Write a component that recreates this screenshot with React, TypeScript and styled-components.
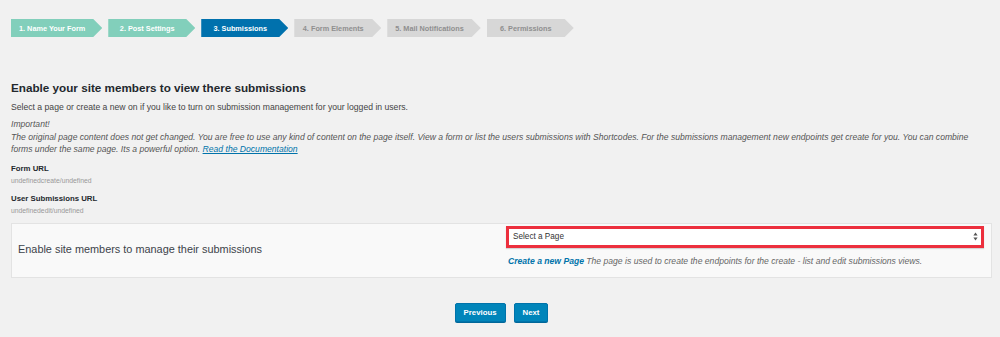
import React from "react";
import styled, { createGlobalStyle } from "styled-components";

const Global = createGlobalStyle`
  html, body { margin: 0; padding: 0; background: #f1f1f1; }
  body { font-family: "Liberation Sans", Arial, sans-serif; color: #444; }
  * { box-sizing: border-box; }
`;

const Page = styled.div`
  width: 1000px;
  height: 337px;
  padding: 19px 8px 0 11px;
  overflow: hidden;
`;

const StepBar = styled.div`
  display: flex;
  gap: 6px;
  height: 18px;
`;

type Tone = "done" | "active" | "todo";

const Step = styled.div<{ $tone: Tone }>`
  height: 18px;
  min-width: 87px;
  padding: 0 17px 0 8px;
  display: flex;
  align-items: center;
  justify-content: center;
  font-size: 7.3px;
  font-weight: 700;
  white-space: nowrap;
  clip-path: polygon(0 0, calc(100% - 9px) 0, 100% 50%, calc(100% - 9px) 100%, 0 100%);
  background: ${(p) =>
    p.$tone === "done" ? "#82cfbb" : p.$tone === "active" ? "#0071ad" : "#d7d7d7"};
  color: ${(p) => (p.$tone === "todo" ? "#8f8f8f" : "#ffffff")};
`;

const Heading = styled.h2`
  margin: 43px 0 0;
  font-size: 11.7px;
  line-height: 16px;
  font-weight: 700;
  color: #23282d;
`;

const Lead = styled.p`
  margin: 5px 0 0;
  font-size: 8.65px;
  line-height: 12px;
  color: #444;
`;

const Note = styled.p`
  margin: 5px 0 0;
  font-size: 8.6px;
  line-height: 12.5px;
  font-style: italic;
  color: #555;
  white-space: nowrap;
`;

const DocLink = styled.a`
  color: #0073aa;
  text-decoration: underline;
`;

const FieldLabel = styled.div<{ $gap: number }>`
  margin-top: ${(p) => p.$gap}px;
  font-size: 7.8px;
  line-height: 12px;
  font-weight: 700;
  color: #23282d;
`;

const FieldValue = styled.div`
  font-size: 6.8px;
  line-height: 11px;
  color: #999;
`;

const Panel = styled.div`
  margin-top: 7px;
  width: 981px;
  height: 55px;
  background: #f9f9f9;
  border: 1px solid #e3e3e3;
  display: grid;
  grid-template-columns: 494px 1fr;
  align-items: center;
`;

const PanelLabel = styled.div`
  padding-left: 6px;
  padding-bottom: 2px;
  font-size: 10.9px;
  color: #3c434a;
`;

const PanelControl = styled.div`
  align-self: start;
  padding: 2px 7px 0 0;
  display: flex;
  flex-direction: column;
`;

const Highlight = styled.div`
  height: 22px;
  border: 3px solid #ec2f3d;
  background: #fff;
  display: flex;
  align-items: center;
  justify-content: space-between;
  padding: 0 3px 0 4px;
  box-shadow: 0 1px 1px rgba(0, 0, 0, 0.15);
  font-size: 8.2px;
  color: #333;
`;

const Help = styled.div`
  margin-top: 8px;
  padding-left: 2px;
  font-size: 8.6px;
  font-style: italic;
  color: #666;
  white-space: nowrap;
`;

const HelpLink = styled.a`
  color: #0073aa;
  font-weight: 700;
  text-decoration: none;
`;

const Actions = styled.div`
  margin-top: 25px;
  width: 981px;
  display: flex;
  justify-content: center;
  gap: 8px;
`;

const Button = styled.button`
  height: 19px;
  padding: 0 8px;
  border: 1px solid #0073aa;
  border-radius: 2px;
  background: #0085ba;
  color: #fff;
  font-family: "Liberation Sans", Arial, sans-serif;
  font-size: 7.8px;
  font-weight: 700;
  box-shadow: 0 1px 0 #006799;
`;

const steps: { label: string; tone: Tone }[] = [
  { label: "1. Name Your Form", tone: "done" },
  { label: "2. Post Settings", tone: "done" },
  { label: "3. Submissions", tone: "active" },
  { label: "4. Form Elements", tone: "todo" },
  { label: "5. Mail Notifications", tone: "todo" },
  { label: "6. Permissions", tone: "todo" },
];

export default function App() {
  return (
    <Page>
      <Global />
      <StepBar>
        {steps.map((s) => (
          <Step key={s.label} $tone={s.tone}>
            {s.label}
          </Step>
        ))}
      </StepBar>
      <Heading>Enable your site members to view there submissions</Heading>
      <Lead>
        Select a page or create a new on if you like to turn on submission management for your
        logged in users.
      </Lead>
      <Note>
        Important!
        <br />
        The original page content does not get changed. You are free to use any kind of content on
        the page itself. View a form or list the users submissions with Shortcodes. For the
        submissions management new endpoints get create for you. You can combine
        <br />
        forms under the same page. Its a powerful option.{" "}
        <DocLink href="#">Read the Documentation</DocLink>
      </Note>
      <FieldLabel $gap={7}>Form URL</FieldLabel>
      <FieldValue>undefinedcreate/undefined</FieldValue>
      <FieldLabel $gap={7}>User Submissions URL</FieldLabel>
      <FieldValue>undefinededit/undefined</FieldValue>
      <Panel>
        <PanelLabel>Enable site members to manage their submissions</PanelLabel>
        <PanelControl>
          <Highlight>
            <span>Select a Page</span>
            <svg width="5" height="9" viewBox="0 0 5 9">
              <path d="M2.5 0.5 L4.6 3.6 H0.4 Z" fill="#555" />
              <path d="M2.5 8.5 L4.6 5.4 H0.4 Z" fill="#555" />
            </svg>
          </Highlight>
          <Help>
            <HelpLink href="#">Create a new Page</HelpLink> The page is used to create the endpoints
            for the create - list and edit submissions views.
          </Help>
        </PanelControl>
      </Panel>
      <Actions>
        <Button>Previous</Button>
        <Button>Next</Button>
      </Actions>
    </Page>
  );
}
